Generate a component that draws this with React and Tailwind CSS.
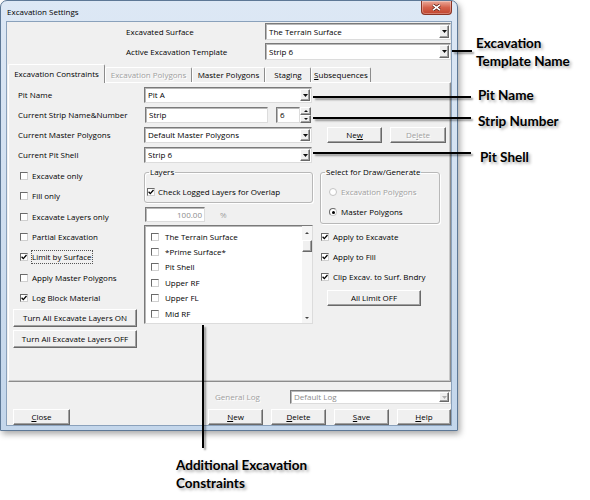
const RAISED =
  'border border-t-white border-l-white border-r-[#696969] border-b-[#696969] shadow-[inset_-1px_-1px_0_#a0a0a0]';
const SUNKEN =
  'border border-t-[#7a7a7a] border-l-[#7a7a7a] border-r-[#dcdcdc] border-b-[#dcdcdc] shadow-[inset_1px_1px_0_#b8b8b8]';
const DIS = 'text-[#a0a0a0] [text-shadow:1px_1px_0_#fff]';
const GROUP = 'rounded-[3px] border border-[#b8b8b8] shadow-[inset_1px_1px_0_#fff,1px_1px_0_#fff]';

function DropBtn({ disabled }) {
  return (
    <span className={`my-px mr-px flex w-[10px] items-center justify-center bg-[#f0f0f0] ${RAISED}`}>
      <svg width="5" height="3" viewBox="0 0 5 3">
        <path d="M0 0H5L2.5 3Z" fill={disabled ? '#b0b0b0' : '#111'} />
      </svg>
    </span>
  );
}

function Combo({ value, className = '', disabled }) {
  return (
    <div className={`flex bg-white ${SUNKEN} ${className}`}>
      <span
        className={`flex flex-1 items-center overflow-hidden whitespace-nowrap pl-[3px] ${
          disabled ? 'text-[#8c8c8c]' : ''
        }`}
      >
        {value}
      </span>
      <DropBtn disabled={disabled} />
    </div>
  );
}

function Btn({ children, className = '', disabled }) {
  return (
    <button
      type="button"
      className={`flex items-center justify-center bg-[#f0f0f0] ${RAISED} ${disabled ? DIS : ''} ${className}`}
    >
      {children}
    </button>
  );
}

function Box({ checked }) {
  return (
    <span className="flex h-[8px] w-[8px] shrink-0 items-center justify-center border border-t-[#6b6b6b] border-l-[#6b6b6b] border-r-[#d0d0d0] border-b-[#d0d0d0] bg-white">
      {checked && (
        <svg width="6" height="6" viewBox="0 0 6 6">
          <path d="M0.6 2.8L2.3 4.6L5.5 1" fill="none" stroke="#000" strokeWidth="1.3" />
        </svg>
      )}
    </span>
  );
}

function Check({ label, checked, gap = 'gap-[4px]', className = '', focus }) {
  return (
    <div className={`flex items-center ${gap} ${className}`}>
      <Box checked={checked} />
      <span className={focus ? 'outline-1 outline-dotted outline-[#555]' : ''}>{label}</span>
    </div>
  );
}

function Radio({ label, selected, disabled }) {
  return (
    <div className="flex h-[14px] items-center gap-[4px] pl-[6px]">
      <span
        className={`flex h-[8px] w-[8px] items-center justify-center rounded-full border bg-white ${
          disabled ? 'border-[#c4c4c4]' : 'border-t-[#6b6b6b] border-l-[#6b6b6b] border-r-[#c8c8c8] border-b-[#c8c8c8]'
        }`}
      >
        {selected && <span className="h-[3px] w-[3px] rounded-full bg-black" />}
      </span>
      <span className={disabled ? DIS : ''}>{label}</span>
    </div>
  );
}

const tabs = [
  { label: 'Excavation Constraints', w: 'w-[97px]', active: true },
  { label: 'Excavation Polygons', w: 'w-[87px]', disabled: true },
  { label: 'Master Polygons', w: 'w-[73px]' },
  { label: 'Staging', w: 'w-[46px]' },
  {
    label: (
      <>
        <u>S</u>ubsequences
      </>
    ),
    w: 'w-[60px]',
  },
];

const leftChecks = [
  { label: 'Excavate only' },
  { label: 'Fill only' },
  { label: 'Excavate Layers only' },
  { label: 'Partial Excavation' },
  { label: 'Limit by Surface', checked: true, focus: true },
  { label: 'Apply Master Polygons' },
  { label: 'Log Block Material', checked: true },
];

const layers = ['The Terrain Surface', '*Prime Surface*', 'Pit Shell', 'Upper RF', 'Upper FL', 'Mid RF'];

const LINE = 'absolute bg-black shadow-[2px_2px_2px_rgba(0,0,0,0.4)]';
const NOTE =
  'absolute whitespace-nowrap text-[13.5px] font-bold leading-[18px] text-black [font-family:Lato,sans-serif] [text-shadow:2px_2px_3px_rgba(0,0,0,0.35)]';

function Row({ label, children }) {
  return (
    <div className="flex h-[16px] items-stretch pl-[9px]">
      <span className="flex w-[126px] items-center">{label}</span>
      {children}
    </div>
  );
}

export default function App() {
  return (
    <div className="relative h-[500px] w-[590px] overflow-hidden bg-white text-[8px] text-black [font-family:'Open_Sans',sans-serif]">
      {/* dialog window */}
      <div className="flex h-[431px] w-[458px] flex-col rounded-t-[7px] border border-[#5d7896] bg-linear-to-b from-[#dde8f5] to-[#c3d6eb] shadow-[2px_3px_6px_rgba(0,0,0,0.35)]">
        <div className="flex h-[20px] items-start justify-between pl-[6px] pr-[5px]">
          <span className="mt-[5px] leading-[12px]">Excavation Settings</span>
          <div className="flex h-[14px] w-[31px] items-center justify-center rounded-b-[4px] border border-t-0 border-[#8a3424] bg-linear-to-b from-[#eaa99a] via-[#d4624c] to-[#c0432d] shadow-[inset_0_0_0_1px_rgba(255,255,255,0.3)]">
            <svg width="9" height="7" viewBox="0 0 9 7">
              <path d="M1 0.8L8 6.2M8 0.8L1 6.2" stroke="#5a1e14" strokeWidth="3" />
              <path d="M1 0.8L8 6.2M8 0.8L1 6.2" stroke="#fff" strokeWidth="1.6" />
            </svg>
          </div>
        </div>

        <div className="mx-[5px] mb-[4px] flex flex-1 flex-col border border-[#8aa1bb] bg-[#f0f0f0]">
          {/* header */}
          <div className="flex flex-col gap-[3px] pt-[1px]">
            <div className="flex h-[17px]">
              <span className="flex w-[258px] items-center pl-[119px]">Excavated Surface</span>
              <Combo value="The Terrain Surface" className="w-[186px]" />
            </div>
            <div className="flex h-[17px]">
              <span className="flex w-[258px] items-center pl-[119px]">Active Excavation Template</span>
              <Combo value="Strip 6" className="w-[186px]" />
            </div>
          </div>

          {/* tab control */}
          <div className="ml-[1px] mt-[4px] flex flex-col">
            <div className="flex h-[18px] items-end">
              {tabs.map((t, i) => (
                <div
                  key={i}
                  className={`flex items-center justify-center whitespace-nowrap rounded-t-[2px] border-l border-r border-t border-l-white border-r-[#8c8c8c] border-t-white ${
                    t.w
                  } ${t.active ? 'relative top-px z-10 h-[19px] bg-[#f0f0f0] pb-[1px]' : 'h-[15px]'} ${
                    t.disabled ? DIS : ''
                  }`}
                >
                  {t.label}
                </div>
              ))}
            </div>
            <div className="flex h-[300px] flex-col border border-t-white border-l-white border-r-[#8c8c8c] border-b-[#8c8c8c] shadow-[inset_-1px_-1px_0_#c8c8c8] pt-[4px]">
              <div className="flex flex-col gap-[4px]">
                <Row label="Pit Name">
                  <Combo value="Pit A" className="w-[168px]" />
                </Row>
                <Row label="Current Strip Name&Number">
                  <div className={`ml-[1px] flex w-[123px] items-center bg-white pl-[3px] ${SUNKEN}`}>Strip</div>
                  <div className={`ml-[8px] flex w-[24px] items-center bg-white pl-[3px] ${SUNKEN}`}>6</div>
                  <div className="flex w-[11px] flex-col">
                    <span className={`flex h-[8px] items-center justify-center bg-[#f0f0f0] ${RAISED}`}>
                      <svg width="4" height="2" viewBox="0 0 4 2">
                        <path d="M0 2H4L2 0Z" fill="#111" />
                      </svg>
                    </span>
                    <span className={`flex h-[8px] items-center justify-center bg-[#f0f0f0] ${RAISED}`}>
                      <svg width="4" height="2" viewBox="0 0 4 2">
                        <path d="M0 0H4L2 2Z" fill="#111" />
                      </svg>
                    </span>
                  </div>
                </Row>
                <Row label="Current Master Polygons">
                  <Combo value="Default Master Polygons" className="w-[168px]" />
                  <Btn className="ml-[15px] w-[55px]">
                    Ne<u>w</u>
                  </Btn>
                  <Btn className="ml-[8px] w-[56px]" disabled>
                    De<u>l</u>ete
                  </Btn>
                </Row>
                <Row label="Current Pit Shell">
                  <Combo value="Strip 6" className="w-[168px]" />
                </Row>
              </div>

              {/* lower section */}
              <div className="mt-[3px] flex pl-[4px]">
                {/* left column */}
                <div className="flex w-[124px] flex-col">
                  {leftChecks.map((c) => (
                    <Check
                      key={c.label}
                      label={c.label}
                      checked={c.checked}
                      focus={c.focus}
                      className="h-[20.3px] pl-[7px]"
                    />
                  ))}
                  <Btn className="mt-[1px] h-[18px] w-full">Turn All Excavate Layers ON</Btn>
                  <Btn className="mt-[3px] h-[18px] w-full">Turn All Excavate Layers OFF</Btn>
                </div>

                {/* middle column */}
                <div className="ml-[7px] flex w-[169px] flex-col">
                  <fieldset className={`px-[2px] pb-[3px] ${GROUP}`}>
                    <legend className="ml-[2px] px-[1px] leading-[12px]">Layers</legend>
                    <Check
                      label="Check Logged Layers for Overlap"
                      checked
                      gap="gap-[3px]"
                      className="mt-[7px] h-[14px]"
                    />
                  </fieldset>
                  <div className="mt-[4px] flex h-[15px] items-center">
                    <div
                      className={`ml-[1px] flex h-full w-[60px] items-center justify-end bg-white pr-[2px] text-[#8c8c8c] ${SUNKEN}`}
                    >
                      100.00
                    </div>
                    <span className="ml-[15px] text-[#a0a0a0]">%</span>
                  </div>
                  <div className={`mt-[3px] flex h-[99px] bg-white ${SUNKEN}`}>
                    <div className="flex flex-1 flex-col pt-[3px]">
                      {layers.map((l) => (
                        <Check key={l} label={l} gap="gap-[6px]" className="h-[15.4px] pl-[6px]" />
                      ))}
                    </div>
                    <div className="flex w-[10px] flex-col items-center bg-[#f5f5f5]">
                      <svg className="mt-[6px]" width="4" height="2" viewBox="0 0 4 2">
                        <path d="M0 2H4L2 0Z" fill="#444" />
                      </svg>
                      <span className={`mt-[6px] h-[12px] w-[10px] bg-[#f0f0f0] ${RAISED}`} />
                      <svg className="mb-[4px] mt-auto" width="4" height="2" viewBox="0 0 4 2">
                        <path d="M0 0H4L2 2Z" fill="#444" />
                      </svg>
                    </div>
                  </div>
                </div>

                {/* right column */}
                <div className="ml-[7px] flex w-[120px] flex-col">
                  <fieldset className={`px-[2px] pb-[4px] ${GROUP}`}>
                    <legend className="ml-[2px] px-[1px] leading-[12px]">Select for Draw/Generate</legend>
                    <div className="mt-[7px] flex flex-col gap-[6px]">
                      <Radio label="Excavation Polygons" disabled />
                      <Radio label="Master Polygons" selected />
                    </div>
                  </fieldset>
                  <div className="mt-[3px] flex flex-col pl-[1px]">
                    <Check label="Apply to Excavate" checked className="h-[20px]" />
                    <Check label="Apply to Fill" checked className="h-[20px]" />
                    <Check label="Clip Excav. to Surf. Bndry" checked className="h-[20px]" />
                  </div>
                  <Btn className="ml-[7px] mt-[3px] h-[16px] w-[94px]">All Limit OFF</Btn>
                </div>
              </div>
            </div>
          </div>

          {/* bottom area */}
          <div className="mt-[8px] flex h-[14px] items-stretch">
            <span className={`flex w-[283px] items-center pl-[208px] ${DIS}`}>General Log</span>
            <Combo value="Default Log" className="w-[161px]" disabled />
          </div>
          <div className="mt-[5px] flex h-[16px]">
            <Btn className="ml-[6px] w-[57px]">
              <u>C</u>lose
            </Btn>
            <div className="ml-[138px] flex gap-[8px]">
              <Btn className="w-[55px]">
                <u>N</u>ew
              </Btn>
              <Btn className="w-[55px]">
                <u>D</u>elete
              </Btn>
              <Btn className="w-[55px]">
                <u>S</u>ave
              </Btn>
              <Btn className="w-[54px]">
                <u>H</u>elp
              </Btn>
            </div>
          </div>
        </div>
      </div>

      {/* callouts */}
      <div className={`${LINE} left-[452px] top-[50px] h-[2px] w-[20px]`} />
      <div className={`${NOTE} left-[476px] top-[34px]`}>
        Excavation
        <br />
        Template Name
      </div>

      <div className={`${LINE} left-[313px] top-[96px] h-[2px] w-[158px]`} />
      <div className={`${NOTE} left-[478px] top-[86px]`}>Pit Name</div>

      <div className={`${LINE} left-[313px] top-[117px] h-[2px] w-[158px]`} />
      <div className={`${NOTE} left-[478px] top-[112px]`}>Strip Number</div>

      <div className={`${LINE} left-[313px] top-[152px] h-[2px] w-[158px]`} />
      <div className={`${NOTE} left-[480px] top-[148px]`}>Pit Shell</div>

      <div className={`${LINE} left-[202px] top-[325px] h-[123px] w-[2px]`} />
      <div className={`${NOTE} left-[176px] top-[456px]`}>
        Additional Excavation
        <br />
        Constraints
      </div>
    </div>
  );
}
